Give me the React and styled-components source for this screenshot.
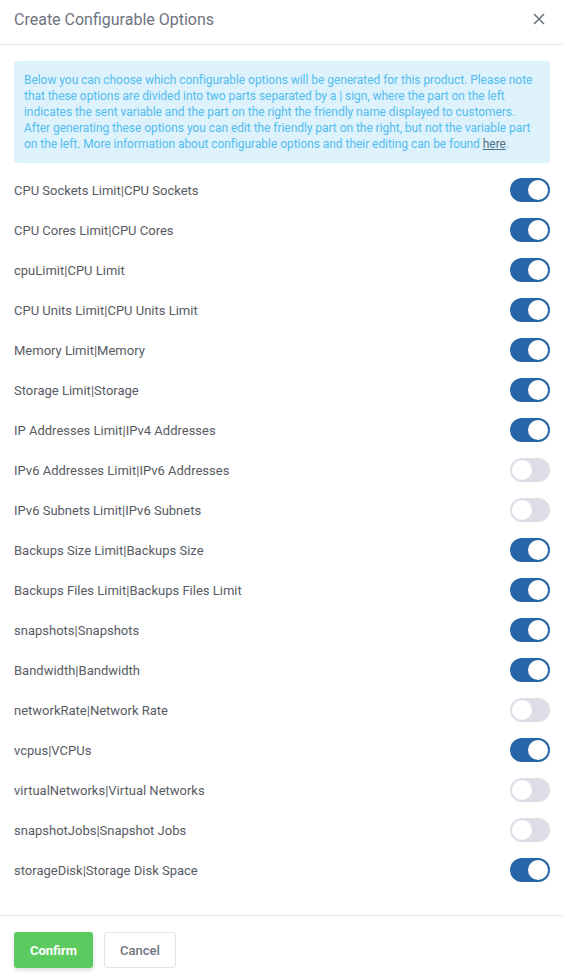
import React, { useState } from "react";
import styled, { createGlobalStyle } from "styled-components";

const GlobalStyle = createGlobalStyle`
  * { box-sizing: border-box; }
  body {
    margin: 0;
    background: #fff;
    font-family: Roboto, "Liberation Sans", sans-serif;
  }
`;

const OPTIONS = [
  ["CPU Sockets Limit|CPU Sockets", true],
  ["CPU Cores Limit|CPU Cores", true],
  ["cpuLimit|CPU Limit", true],
  ["CPU Units Limit|CPU Units Limit", true],
  ["Memory Limit|Memory", true],
  ["Storage Limit|Storage", true],
  ["IP Addresses Limit|IPv4 Addresses", true],
  ["IPv6 Addresses Limit|IPv6 Addresses", false],
  ["IPv6 Subnets Limit|IPv6 Subnets", false],
  ["Backups Size Limit|Backups Size", true],
  ["Backups Files Limit|Backups Files Limit", true],
  ["snapshots|Snapshots", true],
  ["Bandwidth|Bandwidth", true],
  ["networkRate|Network Rate", false],
  ["vcpus|VCPUs", true],
  ["virtualNetworks|Virtual Networks", false],
  ["snapshotJobs|Snapshot Jobs", false],
  ["storageDisk|Storage Disk Space", true],
];

const App = () => {
  const [values, setValues] = useState(OPTIONS.map((o) => o[1]));
  const toggle = (idx) =>
    setValues((v) => v.map((val, i) => (i === idx ? !val : val)));

  return (
    <Modal>
      <GlobalStyle />
      <Header>
        <Title>Create Configurable Options</Title>
        <CloseButton aria-label="close">
          <svg width="12" height="12" viewBox="0 0 12 12">
            <path d="M1 1L11 11M11 1L1 11" stroke="#6f7480" strokeWidth="1.6" />
          </svg>
        </CloseButton>
      </Header>
      <Body>
        <InfoBox>
          Below you can choose which configurable options will be generated for
          this product. Please note that these options are divided into two
          parts separated by a | sign, where the part on the left indicates the
          sent variable and the part on the right the friendly name displayed to
          customers. After generating these options you can edit the friendly
          part on the right, but not the variable part on the left. More
          information about configurable options and their editing can be found{" "}
          <InfoLink href="#">here</InfoLink>.
        </InfoBox>
        <OptionList>
          {OPTIONS.map(([label], idx) => (
            <OptionRow key={label}>
              <OptionLabel>{label}</OptionLabel>
              <Switch $on={values[idx]} onClick={() => toggle(idx)}>
                <Knob $on={values[idx]} />
              </Switch>
            </OptionRow>
          ))}
        </OptionList>
      </Body>
      <Footer>
        <ConfirmButton>Confirm</ConfirmButton>
        <CancelButton>Cancel</CancelButton>
      </Footer>
    </Modal>
  );
};

export default App;

const Modal = styled.div`
  width: 563px;
  background: #fff;
`;
const Header = styled.div`
  display: flex;
  align-items: center;
  justify-content: space-between;
  height: 45px;
  padding: 0 18px 6px 14px;
  border-bottom: 1px solid #e9eaee;
`;
const Title = styled.span`
  font-size: 16px;
  color: #6e7380;
`;
const CloseButton = styled.button`
  display: flex;
  padding: 0;
  border: none;
  background: none;
  cursor: pointer;
`;
const Body = styled.div`
  padding: 16px 13px 25px 14px;
`;
const InfoBox = styled.div`
  padding: 11px 10px 11px 10px;
  background: #def2fc;
  border-radius: 3px;
  color: #52bdf0;
  font-size: 12px;
  line-height: 16px;
  letter-spacing: -0.05px;
`;
const InfoLink = styled.a`
  color: #4f6f86;
  text-decoration: underline;
`;
const OptionList = styled.div`
  margin-top: 7px;
  display: flex;
  flex-direction: column;
`;
const OptionRow = styled.div`
  display: flex;
  align-items: center;
  justify-content: space-between;
  height: 40px;
`;
const OptionLabel = styled.span`
  font-size: 13px;
  color: #575b63;
`;
const Switch = styled.div`
  position: relative;
  width: 40px;
  height: 24px;
  border-radius: 12px;
  background: ${({ $on }) => ($on ? "#2765a9" : "#dcdde6")};
  cursor: pointer;
`;
const Knob = styled.span`
  position: absolute;
  top: 2px;
  left: ${({ $on }) => ($on ? "18px" : "2px")};
  width: 20px;
  height: 20px;
  border-radius: 50%;
  background: #fff;
`;
const Footer = styled.div`
  display: flex;
  gap: 11px;
  padding: 16px 14px;
  border-top: 1px solid #e9eaee;
`;
const BaseButton = styled.button`
  height: 36px;
  border-radius: 3px;
  font-family: Roboto, "Liberation Sans", sans-serif;
  font-size: 13px;
  font-weight: 700;
  cursor: pointer;
`;
const ConfirmButton = styled(BaseButton)`
  width: 79px;
  border: none;
  background: #5ccb5f;
  color: #fff;
  box-shadow: 0 2px 4px rgba(0, 0, 0, 0.15);
`;
const CancelButton = styled(BaseButton)`
  width: 72px;
  border: 1px solid #e3e4e9;
  background: #fff;
  color: #6f7480;
  font-weight: 500;
`;
